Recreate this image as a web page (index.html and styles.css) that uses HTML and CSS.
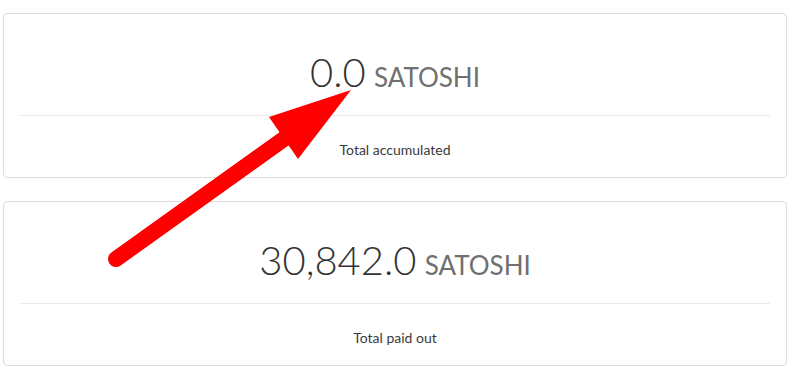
FILE: index.html
```html
<!DOCTYPE html>
<html lang="en">
<head>
  <meta charset="UTF-8" />
  <meta name="viewport" content="width=device-width, initial-scale=1.0" />
  <title>Balance</title>
  <link rel="stylesheet" href="styles.css">
</head>
<body>
  <div class="stats">
    <div class="stat-card">
      <div class="stat-value">
        <span class="amount">0.0</span> <span class="unit">SATOSHI</span>
      </div>
      <div class="stat-label">Total accumulated</div>
    </div>
    <div class="stat-card">
      <div class="stat-value">
        <span class="amount">30,842.0</span> <span class="unit">SATOSHI</span>
      </div>
      <div class="stat-label">Total paid out</div>
    </div>
  </div>

  <svg class="pointer" width="793" height="377" viewBox="0 0 793 377">
    <line x1="116" y1="259" x2="288" y2="136" stroke="#ff0000" stroke-width="16" stroke-linecap="round" />
    <polygon points="351,90 269,117 298,159" fill="#ff0000" />
  </svg>
</body>
</html>
```

FILE: styles.css
```css
body {
  margin: 0;
  background-color: #fff;
  color: #333;
  font-family: "Lato", "Noto Sans", sans-serif;
}

.stats {
  display: flex;
  flex-direction: column;
  gap: 23px;
  padding: 13px 6px 0 3px;
}

.stat-card {
  border: 1px solid #ddd;
  border-radius: 4px;
  padding: 0 16px;
  height: 163px;
  display: flex;
  flex-direction: column;
}

.stat-value {
  height: 102px;
  box-sizing: border-box;
  padding-top: 38px;
  text-align: center;
  border-bottom: 1px solid #eaeaea;
  line-height: 40px;
}

.amount {
  font-size: 40px;
  font-weight: 300;
  color: #333;
}

.unit {
  font-size: 26px;
  color: #707070;
  margin-left: 4px;
}

.stat-label {
  padding-top: 25px;
  text-align: center;
  font-size: 14px;
  color: #3a3a3a;
}

.pointer {
  position: absolute;
  top: 0;
  left: 0;
  pointer-events: none;
}
```
